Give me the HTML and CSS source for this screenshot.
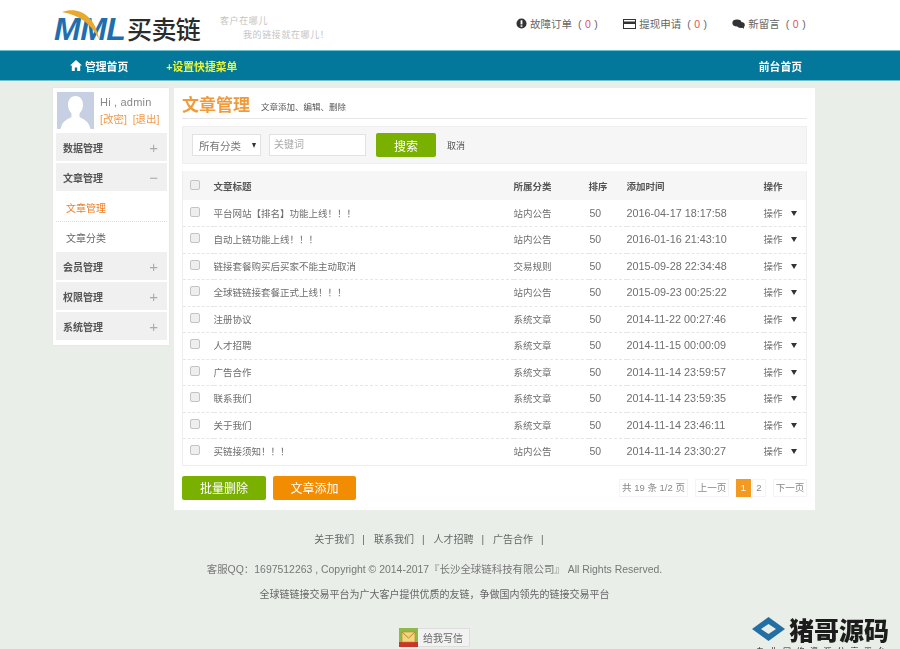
FILE: index.html
```html
<!DOCTYPE html>
<html lang="zh">
<head>
<meta charset="utf-8">
<title>文章管理</title>
<link rel="stylesheet" href="styles.css">
</head>
<body>
<div class="page">
<header class="top">
  <div class="brand">
    <div class="logo">
      <svg class="logo-arc" width="42" height="32" viewBox="0 0 42 32"><path d="M0 3C16 -3 33 6 37 30C29 15 18 6 0 3Z" fill="#e9a92f"/></svg>
      <span class="logo-mml">MML</span><span class="logo-cn">买卖链</span>
    </div>
    <div class="slogan"><span>客户在哪儿</span><span class="slogan-2">我的链接就在哪儿！</span></div>
  </div>
  <div class="alerts">
    <span class="alert"><svg width="11" height="11" viewBox="0 0 12 12"><circle cx="6" cy="6" r="5.500" fill="#333"/><rect x="5" y="2.500" width="2" height="4.500" fill="#fff"/><rect x="5" y="8" width="2" height="1.600" fill="#fff"/></svg>故障订单<span class="cnt">( <b>0</b> )</span></span>
    <span class="alert"><svg width="13" height="10" viewBox="0 0 13 10"><rect x=".5" y=".5" width="12" height="9" fill="#fff" stroke="#333"/><rect x="0" y="2.500" width="13" height="2.500" fill="#333"/></svg>提现申请<span class="cnt">( <b>0</b> )</span></span>
    <span class="alert"><svg width="13" height="10" viewBox="0 0 13 10"><ellipse cx="5" cy="4" rx="4.600" ry="3.400" fill="#333"/><ellipse cx="9" cy="6" rx="3.800" ry="3" fill="#333"/><path d="M10 8l2 2-.2-3z" fill="#333"/></svg>新留言<span class="cnt">( <b>0</b> )</span></span>
  </div>
</header>
<nav class="nav">
  <div class="nav-left">
    <a class="nav-home"><svg width="12" height="11" viewBox="0 0 12 11"><path d="M6 0L0 5.500h1.800V11h3V7.500h2.400V11h3V5.500H12z" fill="#fff"/></svg>管理首页</a>
    <a class="nav-quick">+设置快捷菜单</a>
  </div>
  <a class="nav-front">前台首页</a>
</nav>
<div class="wrap">
  <aside class="side">
    <div class="user">
      <svg class="avatar" width="37" height="37" viewBox="0 0 37 37"><rect width="37" height="37" fill="#c6d0e2"/><path d="M18.500 4c5 0 7.500 4 7.500 9 0 4-2 7-3.500 8.500V25c3 2 9 3 11 12H3.500c2-9 8-10 11-12v-3.500C13 20 11 17 11 13c0-5 2.500-9 7.500-9z" fill="#fff"/></svg>
      <div class="user-info">
        <div class="hi">Hi , admin</div>
        <div class="user-links">[改密]&nbsp;&nbsp;[退出]</div>
      </div>
    </div>
    <div class="menu-head">数据管理<span class="sign">+</span></div>
    <div class="menu-head">文章管理<span class="sign">−</span></div>
    <a class="sub sub-on">文章管理</a>
    <a class="sub">文章分类</a>
    <div class="menu-head">会员管理<span class="sign">+</span></div>
    <div class="menu-head">权限管理<span class="sign">+</span></div>
    <div class="menu-head">系统管理<span class="sign">+</span></div>
  </aside>
  <main class="main">
    <div class="title-row"><h1>文章管理</h1><span class="title-note">文章添加、编辑、删除</span></div>
    <div class="search">
      <div class="select">所有分类<span class="caret"></span></div>
      <div class="kw">关键词</div>
      <button class="btn btn-green btn-search">搜索</button>
      <a class="cancel">取消</a>
    </div>
    <table class="list">
      <thead>
        <tr><th class="c-ck"><i class="ck"></i></th><th>文章标题</th><th class="c-cat">所属分类</th><th class="c-sort">排序</th><th class="c-time">添加时间</th><th class="c-op">操作</th></tr>
      </thead>
      <tbody>
        <tr><td class="c-ck"><i class="ck"></i></td><td>平台网站【排名】功能上线！！！</td><td>站内公告</td><td class="n">50</td><td class="t">2016-04-17 18:17:58</td><td>操作<span class="op"></span></td></tr>
        <tr><td class="c-ck"><i class="ck"></i></td><td>自动上链功能上线！！！</td><td>站内公告</td><td class="n">50</td><td class="t">2016-01-16 21:43:10</td><td>操作<span class="op"></span></td></tr>
        <tr><td class="c-ck"><i class="ck"></i></td><td>链接套餐购买后买家不能主动取消</td><td>交易规则</td><td class="n">50</td><td class="t">2015-09-28 22:34:48</td><td>操作<span class="op"></span></td></tr>
        <tr><td class="c-ck"><i class="ck"></i></td><td>全球链链接套餐正式上线！！！</td><td>站内公告</td><td class="n">50</td><td class="t">2015-09-23 00:25:22</td><td>操作<span class="op"></span></td></tr>
        <tr><td class="c-ck"><i class="ck"></i></td><td>注册协议</td><td>系统文章</td><td class="n">50</td><td class="t">2014-11-22 00:27:46</td><td>操作<span class="op"></span></td></tr>
        <tr><td class="c-ck"><i class="ck"></i></td><td>人才招聘</td><td>系统文章</td><td class="n">50</td><td class="t">2014-11-15 00:00:09</td><td>操作<span class="op"></span></td></tr>
        <tr><td class="c-ck"><i class="ck"></i></td><td>广告合作</td><td>系统文章</td><td class="n">50</td><td class="t">2014-11-14 23:59:57</td><td>操作<span class="op"></span></td></tr>
        <tr><td class="c-ck"><i class="ck"></i></td><td>联系我们</td><td>系统文章</td><td class="n">50</td><td class="t">2014-11-14 23:59:35</td><td>操作<span class="op"></span></td></tr>
        <tr><td class="c-ck"><i class="ck"></i></td><td>关于我们</td><td>系统文章</td><td class="n">50</td><td class="t">2014-11-14 23:46:11</td><td>操作<span class="op"></span></td></tr>
        <tr><td class="c-ck"><i class="ck"></i></td><td>买链接须知！！！</td><td>站内公告</td><td class="n">50</td><td class="t">2014-11-14 23:30:27</td><td>操作<span class="op"></span></td></tr>
      </tbody>
    </table>
    <div class="bottom">
      <div class="actions"><button class="btn btn-green">批量删除</button><button class="btn btn-orange">文章添加</button></div>
      <div class="pager"><span class="pg pg-info">共 19 条 1/2 页</span><span class="pg pg-word">上一页</span><span class="pg-cur">1</span><span class="pg pg-num">2</span><span class="pg pg-word">下一页</span></div>
    </div>
  </main>
</div>
<footer class="foot">
  <div class="foot-links"><a>关于我们</a><i>|</i><a>联系我们</a><i>|</i><a>人才招聘</a><i>|</i><a>广告合作</a><i>|</i></div>
  <div class="foot-copy">客服QQ：1697512263 , Copyright © 2014-2017『长沙全球链科技有限公司』 All Rights Reserved.</div>
  <div class="foot-desc">全球链链接交易平台为广大客户提供优质的友链，争做国内领先的链接交易平台</div>
  <div class="mail"><svg width="19" height="19" viewBox="0 0 19 19"><rect width="19" height="19" fill="#8dba4a"/><rect y="14" width="19" height="5" fill="#c9352a"/><rect x="3" y="4" width="13" height="10" fill="#f4d77c" stroke="#b8852c" stroke-width=".6"/><path d="M3 4l6.500 6L16 4" fill="none" stroke="#b8852c"/></svg><span>给我写信</span></div>
</footer>
<div class="mark">
  <svg width="33" height="24" viewBox="0 0 33 24"><path d="M16.500 0L33 12 16.500 24 0 12z" fill="#236fa3"/><path d="M16.500 7L24 12l-7.500 5L9 12z" fill="#e9eee9"/></svg>
  <div class="mark-text"><div class="mark-name">猪哥源码</div><div class="mark-sub">专业网络资源分享平台</div></div>
</div>
</div>
</body>
</html>
```
FILE: styles.css
```css
*{box-sizing:border-box}
html,body{margin:0;padding:0;height:649px;overflow:hidden}
body{background:#e9eee9;font-family:"Liberation Sans","Noto Sans CJK SC",sans-serif;font-size:10px;color:#555}
.page{position:relative;height:649px;overflow:hidden;filter:blur(.6px)}
a{color:inherit;text-decoration:none}
.top{height:50px;background:#fff;display:flex;justify-content:space-between;padding:0 94px 0 54px}
.brand{display:flex;align-items:flex-start}
.logo{position:relative;display:flex;align-items:center;height:40px;margin-top:8px;width:150px}
.logo-arc{position:absolute;left:8px;top:1px;z-index:1}
.logo-mml{position:relative;font:italic 700 32px "Liberation Sans",sans-serif;color:#1f6fae;letter-spacing:-.5px;width:73px;padding-top:3px}
.logo-cn{font:500 25px "Noto Sans CJK SC",sans-serif;color:#2b2b2b;letter-spacing:-.6px;white-space:nowrap;margin-top:-1px}
.slogan{margin:14px 0 0 16px;display:flex;flex-direction:column;font-size:9px;color:#c4c4c4;line-height:14px;letter-spacing:.6px;font-family:"Noto Sans CJK SC",sans-serif}
.slogan-2{margin-left:23px}
.alerts{display:flex;gap:25px;padding-top:17px;height:30px;color:#666;line-height:14px}
.alert{display:flex;align-items:center;gap:3px;font-size:10.500px}
.cnt{margin-left:3px;letter-spacing:.3px}
.cnt b{color:#e0545a;font-weight:400}
.nav{height:31px;background:#03789a;border-top:1px solid #6fc0cf;border-bottom:1px solid #6fc0cf;display:flex;justify-content:space-between;align-items:center;padding:0 98px 0 70px;color:#fff;font-weight:700;font-size:10.800px}
.nav-left{display:flex;gap:38px}
.nav-home{display:flex;align-items:center;gap:3px}
.nav-quick{color:#e8f53c}
.wrap{display:flex;gap:5px;padding:7px 0 0 53px;align-items:flex-start}
.side{width:116px;height:257px;background:#fff;padding:4px 2px 0 3px;box-shadow:0 0 2px #dfe3df;display:flex;flex-direction:column}
.user{display:flex;height:41px;padding-left:1px;flex:none}
.avatar{display:block;margin-right:6px}
.hi{font-size:11px;color:#888;line-height:14px;padding-top:3px;letter-spacing:.2px}
.user-links{color:#ef9a4a;font-size:10.500px;line-height:14px;margin-top:3px;white-space:nowrap}
.menu-head{height:28px;margin-bottom:2px;background:#f0f0f0;display:flex;justify-content:space-between;align-items:center;padding:0 9px 0 7px;font-weight:700;font-size:10px;color:#555;flex:none}
.sign{font-size:15px;font-weight:400;color:#aaa}
.sub{height:29px;display:flex;align-items:center;padding-left:10px;color:#666;font-size:10px;border-bottom:1px dotted #ddd;flex:none}
.sub:last-of-type{border-bottom:0;height:30px}
.sub-on{color:#ef7d22}
.main{width:641px;height:422px;background:#fff;padding:0 8px}
.title-row{height:31px;border-bottom:1px solid #e6e6e6;display:flex;align-items:center;gap:11px}
h1{margin:0;font:700 17px "Noto Sans CJK SC",sans-serif;color:#ef9b3c}
.title-note{font-size:8.500px;color:#555;padding-top:5px}
.search{margin-top:7px;height:38px;background:#f6f6f6;border:1px solid #eee;display:flex;align-items:center;padding-left:9px}
.select{width:69px;height:22px;background:#fff;border:1px solid #e2e2e2;display:flex;justify-content:space-between;align-items:center;padding:0 4px 0 6px;font-size:10.500px;color:#777}
.caret{border-top:5px solid #333;border-left:2.500px solid transparent;border-right:2.500px solid transparent}
.kw{width:97px;height:22px;margin-left:8px;background:#fff;border:1px solid #e2e2e2;padding-left:4px;line-height:20px;color:#aaa;font-size:10px}
.btn{border:0;border-radius:2px;color:#fff;font-family:inherit;font-size:12px;height:24px;padding:0}
.btn-green{background:#7ab000;width:84px}
.btn-search{width:60px;margin-left:10px}
.btn-orange{background:#f28c00;width:83px;margin-left:7px}
.cancel{margin-left:11px;font-size:9px;color:#555}
.list{margin-top:7px;width:625px;border-collapse:collapse;table-layout:fixed;border:1px solid #eee;border-top:0}
.list th{height:29px;background:#f6f6f6;font-size:9.500px;font-weight:700;color:#555;text-align:left;padding:0}
.list td{height:26.500px;padding:0 0 1px;font-size:9.500px;color:#6e6e6e;border-bottom:1px dashed #e6e6e6}
.list tr:last-child td{border-bottom:0}
.c-ck{width:31px}
.c-cat{width:75px}
.c-sort{width:38px}
.c-time{width:137px}
.c-op{width:43px}
.list .t{font-size:10.800px}
.list .n{font-size:10.500px;padding-left:1px}
.ck{display:block;width:10px;height:10px;margin:0 0 2px 7px;background:#eee;border:1px solid #c4c4c4;border-radius:2px}
.op{display:inline-block;margin-left:8px;vertical-align:1px;border-top:5px solid #333;border-left:3px solid transparent;border-right:3px solid transparent}
.bottom{display:flex;justify-content:space-between;align-items:center;margin-top:10px}
.actions{display:flex}
.pager{display:flex;align-items:center;gap:7px;font-size:9.500px;color:#888}
.pg{height:18px;line-height:16px;border:1px solid #f4f4f4;text-align:center;white-space:nowrap}
.pg-info{width:69px}
.pg-word{width:34px}
.pg-num{width:14px;margin-left:-6px}
.pg-cur{width:15px;height:18px;line-height:18px;background:#f39a22;color:#fff;text-align:center}
.foot{text-align:center;color:#666;font-size:10px;display:flex;flex-direction:column;align-items:center}
.foot-links{margin:23px 0 0 -41px;line-height:14px;display:flex;gap:8px}
.foot-links i{font-style:normal;margin-right:1px}
.foot-links a{white-space:nowrap}
.foot-copy{margin-top:16px;line-height:14px;font-size:10.450px;color:#777;white-space:nowrap;margin-left:-31px}
.foot-desc{margin-top:11px;line-height:14px;font-size:10px;white-space:nowrap;margin-left:-31px}
.mail{margin-top:26px;display:flex;align-items:center;width:71px;height:19px;background:#f2f2f2;border:1px solid #ddd;border-left:0;color:#666;margin-left:-31px}
.mail span{margin-left:5px;white-space:nowrap}
.mark{position:absolute;left:752px;top:617px;display:flex;align-items:flex-start;gap:4px;color:#1c1c1c}
.mark-name{font:900 25px/24px "Noto Sans CJK SC",sans-serif;white-space:nowrap}
.mark-sub{font-size:8px;letter-spacing:5.500px;white-space:nowrap;margin-top:4px;margin-left:-33px}
```
